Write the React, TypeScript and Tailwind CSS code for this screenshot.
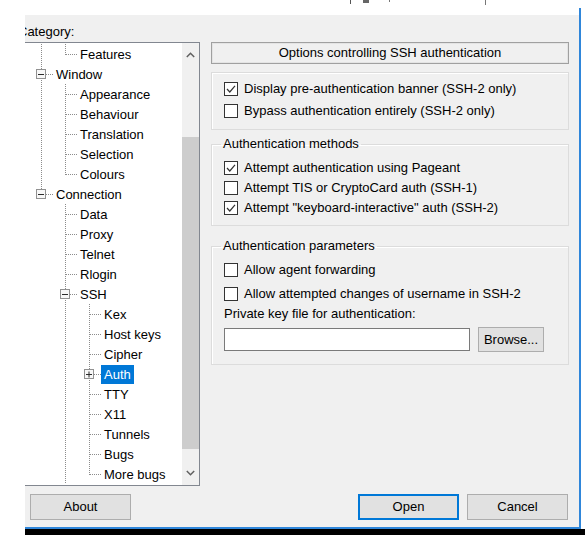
import React from 'react';

type G = ' ' | '|' | 'T' | 'L';

const rows: { label: string; guides: G[]; exp?: '-' | '+'; selected?: boolean }[] = [
  { label: 'Features', guides: ['|', 'L'] },
  { label: 'Window', guides: ['T'], exp: '-' },
  { label: 'Appearance', guides: ['|', 'T'] },
  { label: 'Behaviour', guides: ['|', 'T'] },
  { label: 'Translation', guides: ['|', 'T'] },
  { label: 'Selection', guides: ['|', 'T'] },
  { label: 'Colours', guides: ['|', 'L'] },
  { label: 'Connection', guides: ['L'], exp: '-' },
  { label: 'Data', guides: [' ', 'T'] },
  { label: 'Proxy', guides: [' ', 'T'] },
  { label: 'Telnet', guides: [' ', 'T'] },
  { label: 'Rlogin', guides: [' ', 'T'] },
  { label: 'SSH', guides: [' ', 'T'], exp: '-' },
  { label: 'Kex', guides: [' ', '|', 'T'] },
  { label: 'Host keys', guides: [' ', '|', 'T'] },
  { label: 'Cipher', guides: [' ', '|', 'T'] },
  { label: 'Auth', guides: [' ', '|', 'T'], exp: '+', selected: true },
  { label: 'TTY', guides: [' ', '|', 'T'] },
  { label: 'X11', guides: [' ', '|', 'T'] },
  { label: 'Tunnels', guides: [' ', '|', 'T'] },
  { label: 'Bugs', guides: [' ', '|', 'T'] },
  { label: 'More bugs', guides: [' ', '|', 'L'] },
];

function Guide({ kind, exp }: { kind: G; exp?: '-' | '+' }) {
  const dot = { stroke: '#8c8c8c', strokeDasharray: '1 1' };
  return (
    <svg width="24" height="20" className="block shrink-0">
      {(kind === '|' || kind === 'T') && <line x1="12.5" y1="0" x2="12.5" y2="20" {...dot} />}
      {kind === 'L' && <line x1="12.5" y1="0" x2="12.5" y2="11" {...dot} />}
      {(kind === 'T' || kind === 'L') && <line x1="13" y1="10.5" x2="24" y2="10.5" {...dot} />}
      {exp && (
        <g>
          <rect x="7.5" y="5.5" width="9" height="9" fill="#f7f7f7" stroke="#919191" />
          <line x1="9" y1="10.5" x2="15" y2="10.5" stroke="#2b2b2b" />
          {exp === '+' && <line x1="12" y1="7.5" x2="12" y2="13.5" stroke="#2b2b2b" strokeWidth="1" />}
        </g>
      )}
    </svg>
  );
}

function Chevron({ up }: { up?: boolean }) {
  return (
    <svg width="9" height="6" viewBox="0 0 9 6">
      <polyline
        points={up ? '0.8,5 4.5,1.3 8.2,5' : '0.8,1 4.5,4.7 8.2,1'}
        fill="none"
        stroke="#606060"
        strokeWidth="1.5"
      />
    </svg>
  );
}

function CheckBox({ checked }: { checked?: boolean }) {
  return (
    <svg width="14" height="14" className="block shrink-0">
      <rect x="0.5" y="0.5" width="13" height="13" fill="#fff" stroke="#333" />
      {checked && <polyline points="3,7 5.8,10 11,3.8" fill="none" stroke="#333" strokeWidth="1.2" />}
    </svg>
  );
}

function Option({ label, checked, className = '' }: { label: string; checked?: boolean; className?: string }) {
  return (
    <div className={`flex h-[20px] items-center ${className}`}>
      <CheckBox checked={checked} />
      <span className="ml-[6px] whitespace-nowrap">{label}</span>
    </div>
  );
}

function Btn({ label, primary, className = '' }: { label: string; primary?: boolean; className?: string }) {
  return (
    <div
      className={`flex h-[26px] w-[101px] items-center justify-center bg-[#e1e1e1] ${
        primary ? 'border-2 border-[#0078d7]' : 'border border-[#adadad]'
      } ${className}`}
    >
      {label}
    </div>
  );
}

export default function App() {
  return (
    <div className="flex h-[535px] w-[585px] flex-col overflow-hidden bg-white font-['Liberation_Sans',Arial,sans-serif] text-[13px] text-black">
      {/* scraps of the window behind */}
      <div className="flex h-[8px] items-start">
        <div className="ml-[350px] h-[4px] w-[1px] bg-[#555]" />
        <div className="ml-[12px] h-[3px] w-[6px] bg-[#666]" />
        <div className="ml-[20px] h-[2px] w-[1px] bg-[#777]" />
        <div className="ml-[95px] h-[5px] w-[1px] bg-[#777]" />
      </div>

      <div className="flex h-[521px]">
        <div className="w-[25px] shrink-0" />
        <div className="flex w-[554px] shrink-0 flex-col">
          <div className="h-[7px] bg-white" />
          <div className="flex h-[512px] flex-col overflow-hidden bg-[#f0f0f0]">
            <div className="-ml-[8px] flex w-[562px] flex-col">
              <div className="pl-[1px] pt-[9px] leading-[16px]">Category:</div>

              <div className="mt-[2px] flex">
                {/* tree */}
                <div className="flex h-[444px] w-[183px] border border-[#828790] bg-white">
                  <div className="flex-1 overflow-hidden pl-[11px] pt-[1px]">
                    {rows.map((r) => (
                      <div key={r.label} className="flex h-[20px] items-center">
                        {r.guides.map((g, i) => (
                          <Guide key={i} kind={g} exp={i === r.guides.length - 1 ? r.exp : undefined} />
                        ))}
                        <span
                          className={`whitespace-nowrap px-[3px] leading-[19px] ${
                            r.selected ? 'bg-[#0078d7] text-white' : ''
                          }`}
                        >
                          {r.label}
                        </span>
                      </div>
                    ))}
                  </div>
                  <div className="flex w-[17px] flex-col bg-[#f0f0f0]">
                    <div className="flex h-[24px] items-center justify-center">
                      <Chevron up />
                    </div>
                    <div className="h-[70px]" />
                    <div className="h-[312px] bg-[#cdcdcd]" />
                    <div className="flex-1" />
                    <div className="flex h-[24px] items-center justify-center">
                      <Chevron />
                    </div>
                  </div>
                </div>

                {/* options panel */}
                <div className="ml-[11px] flex w-[358px] flex-col">
                  <div className="flex h-[22px] items-center justify-center border border-[#a0a0a0] shadow-[inset_0_0_0_1px_#e4e4e4]">
                    Options controlling SSH authentication
                  </div>

                  <div className="mt-[8px] flex h-[58px] flex-col border border-[#dcdcdc] pl-[12px] pt-[6px] shadow-[inset_1px_1px_0_#fff]">
                    <Option label="Display pre-authentication banner (SSH-2 only)" checked />
                    <Option label="Bypass authentication entirely (SSH-2 only)" className="mt-[2px]" />
                  </div>

                  <fieldset className="mt-[6px] border border-[#dcdcdc] pb-[7px] pl-[12px] pt-[6px] shadow-[inset_1px_1px_0_#fff]">
                    <legend className="-ml-[3px] px-[2px] leading-[16px]">Authentication methods</legend>
                    <Option label="Attempt authentication using Pageant" checked />
                    <Option label="Attempt TIS or CryptoCard auth (SSH-1)" />
                    <Option label={'Attempt "keyboard-interactive" auth (SSH-2)'} checked />
                  </fieldset>

                  <fieldset className="mt-[12px] border border-[#dcdcdc] pb-[12px] pl-[12px] pt-[6px] shadow-[inset_1px_1px_0_#fff]">
                    <legend className="-ml-[3px] px-[2px] leading-[16px]">Authentication parameters</legend>
                    <Option label="Allow agent forwarding" />
                    <Option label="Allow attempted changes of username in SSH-2" className="mt-[4px]" />
                    <div className="mt-[2px] leading-[16px]">Private key file for authentication:</div>
                    <div className="mt-[5px] flex h-[25px] items-center">
                      <div className="h-[23px] w-[246px] border border-[#7a7a7a] bg-white" />
                      <div className="ml-[8px] flex h-[25px] w-[66px] items-center justify-center border border-[#adadad] bg-[#e1e1e1]">
                        Browse...
                      </div>
                    </div>
                  </fieldset>
                </div>
              </div>

              <div className="mt-[8px] flex items-center justify-between pr-[11px]">
                <Btn label="About" className="ml-[13px]" />
                <div className="flex gap-[8px]">
                  <Btn label="Open" primary />
                  <Btn label="Cancel" />
                </div>
              </div>
            </div>
          </div>
          <div className="h-[2px] bg-[#2f86da]" />
        </div>
        <div className="w-[2px] shrink-0 bg-[#2f86da]" />
      </div>

      <div className="flex h-[6px]">
        <div className="w-[25px] shrink-0" />
        <div className="flex-1 bg-black" />
      </div>
    </div>
  );
}
